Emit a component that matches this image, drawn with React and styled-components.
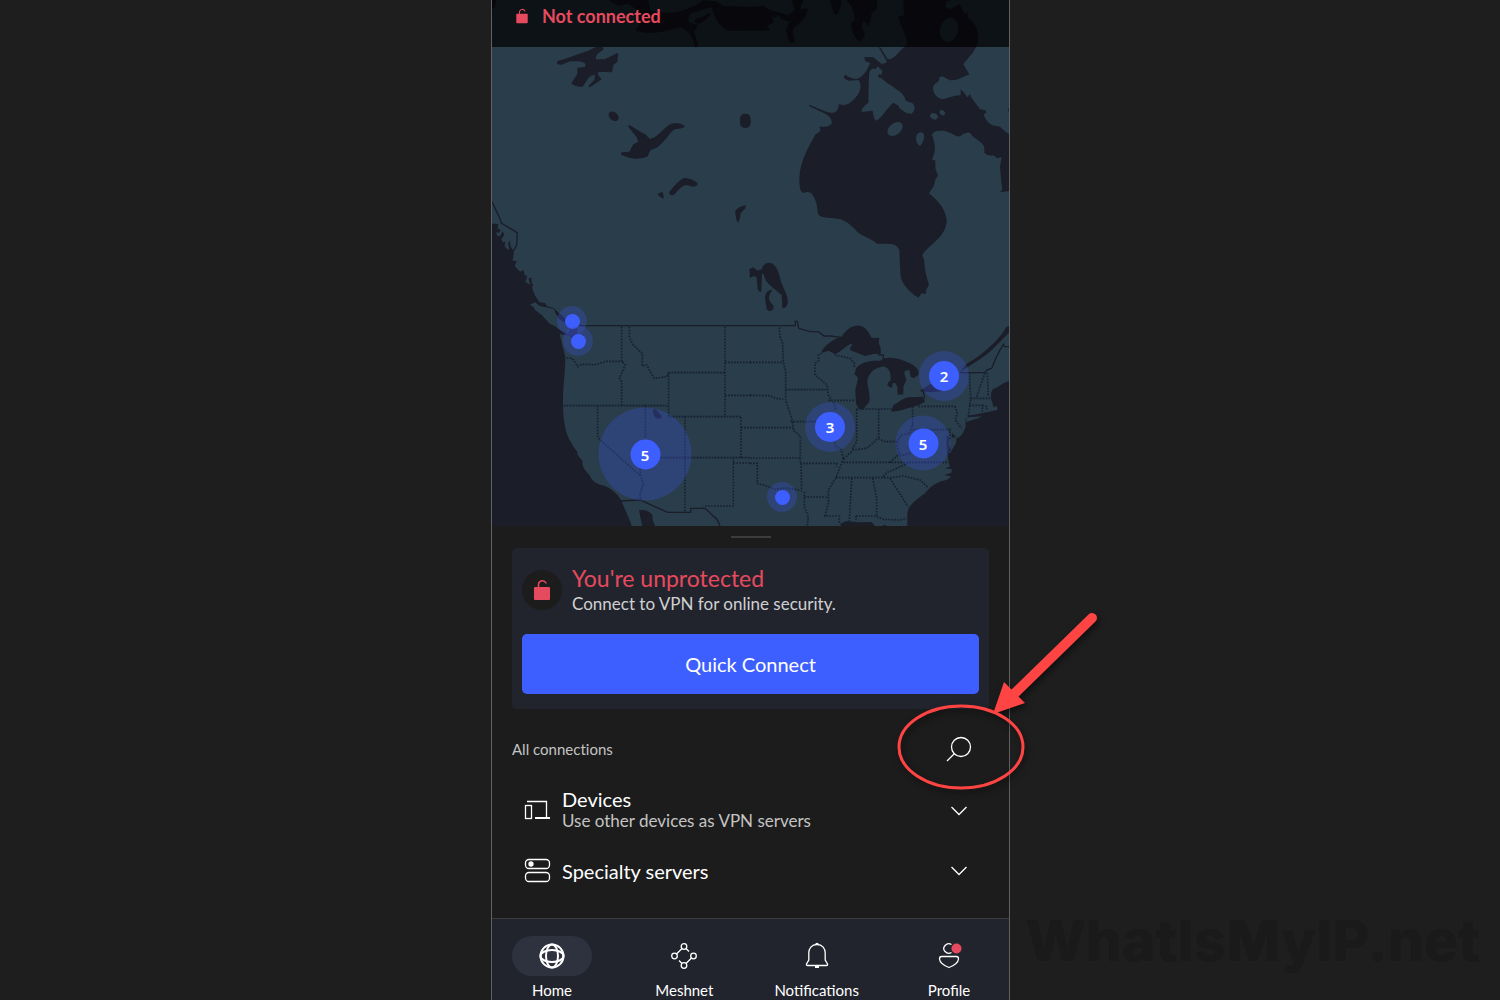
import React, { useState } from 'react';
import styled, { createGlobalStyle } from 'styled-components';

const MAP_WIDTH = 517;
const MAP_HEIGHT = 526;

const PINS = [
	{ id: 'vancouver', x: 80, y: 321, halo: 30, dot: 15 },
	{ id: 'seattle', x: 86, y: 341, halo: 30, dot: 15 },
	{ id: 'southwest', x: 153, y: 454, halo: 93, dot: 30, count: 5 },
	{ id: 'texas', x: 290, y: 497, halo: 30, dot: 15 },
	{ id: 'midwest', x: 338, y: 427, halo: 50, dot: 30, count: 3 },
	{ id: 'east', x: 431, y: 443, halo: 55, dot: 30, count: 5 },
	{ id: 'toronto', x: 452, y: 376, halo: 50, dot: 30, count: 2 },
];

const TABS = [
	{ id: 'home', label: 'Home', Icon: GlobeIcon },
	{ id: 'meshnet', label: 'Meshnet', Icon: MeshIcon },
	{ id: 'notifications', label: 'Notifications', Icon: BellIcon },
	{ id: 'profile', label: 'Profile', Icon: ProfileIcon },
];

function App() {
	const [tab, setTab] = useState('home');
	return (
		<>
			<GlobalStyle />
			<Page>
				<Phone>
					<MapArea>
						<WorldMap />
						{PINS.map((pin) => (
							<Pin
								key={pin.id}
								type="button"
								aria-label={`Servers: ${pin.id}`}
								$halo={pin.halo}
								$dot={pin.dot}
								style={{
									left: `${(pin.x / MAP_WIDTH) * 100}%`,
									top: `${(pin.y / MAP_HEIGHT) * 100}%`,
								}}
							>
								<span>{pin.count}</span>
							</Pin>
						))}
						<StatusBar>
							<LockIcon size={20} />
							Not connected
						</StatusBar>
					</MapArea>
					<Panel>
						<Handle />
						<Card>
							<CardHead>
								<LockBadge>
									<LockIcon size={28} />
								</LockBadge>
								<div>
									<CardTitle>You're unprotected</CardTitle>
									<CardText>Connect to VPN for online security.</CardText>
								</div>
							</CardHead>
							<ConnectButton type="button">Quick Connect</ConnectButton>
						</Card>
						<ListHead>
							<ListTitle>All connections</ListTitle>
							<IconButton type="button" aria-label="Search">
								<SearchIcon />
							</IconButton>
							<Pointer />
						</ListHead>
						<List>
							<Row type="button">
								<DevicesIcon />
								<RowBody>
									<RowTitle>Devices</RowTitle>
									<RowText>Use other devices as VPN servers</RowText>
								</RowBody>
								<ChevronIcon />
							</Row>
							<Row type="button">
								<ServersIcon />
								<RowBody>
									<RowTitle>Specialty servers</RowTitle>
								</RowBody>
								<ChevronIcon />
							</Row>
						</List>
					</Panel>
					<Nav>
						{TABS.map(({ id, label, Icon: TabGlyph }) => (
							<Tab key={id} type="button" onClick={() => setTab(id)}>
								<TabIcon $active={tab === id}>
									<TabGlyph />
								</TabIcon>
								<TabLabel>{label}</TabLabel>
							</Tab>
						))}
					</Nav>
				</Phone>
				<Watermark>WhatIsMyIP.net</Watermark>
			</Page>
		</>
	);
}

export default App;

// The map is drawn on a 3x grid, each group has its own corner as origin.
function WorldMap() {
	return (
		<Map viewBox="0 0 1551 1578" aria-hidden="true">
			<rect width="1551" height="1578" fill="#293d4a" />
			<g fill="#1b1d29">
				<g transform="translate(-6 0)">
					<path d="M6 0H20L14 22L6 26Z" />
					<path d="M355 0L385 18L415 12L440 30L450 70L437 90C460 102 500 100 530 92L572 82C600 95 610 115 615 142L625 140L612 95L625 75L600 68Q590 60 600 42L640 28L665 22C675 60 690 85 720 93L782 92V20L700 18L680 4L640 0C600 30 560 40 510 38L480 30L475 0Z" />
					<path d="M625 72L650 58L663 42L655 38L640 50L618 56L612 66Z" />
					<path d="M200 188Q202 180 215 180L295 152L318 141H338L341 148C325 160 315 165 318 178L345 178L380 160L385 160L382 185L370 195L366 217L325 215L324 225L335 238L300 262L295 258L313 240L315 225Q300 222 288 245L278 260Q255 262 244 250L262 222L262 203L285 201Q294 187 265 184L240 184L215 194Q203 196 200 188Z" />
					<ellipse cx="371" cy="349" rx="17" ry="12" transform="rotate(40 371 349)" />
					<path d="M415 376C425 374 440 392 465 402L480 417C510 410 525 375 550 370C565 368 582 372 584 380C580 386 560 384 550 390C535 405 520 430 500 443L482 450L472 470Q435 484 395 465Q390 460 395 457L418 455L430 433L445 425C440 405 425 395 415 380Z" />
					<rect x="750" y="341" width="32" height="43" rx="15" />
					<path d="M537 578C550 560 570 538 582 534Q605 534 623 550Q624 558 610 560L590 555C570 558 560 578 552 584Q542 590 537 578Z" />
					<path d="M502 583L510 578L518 576L522 596L512 592Z" />
					<path d="M735 635Q745 618 768 616L766 625L752 640L750 655L745 668L740 662Z" />
				</g>
				<g transform="translate(774 0)">
					<path d="M0 20L40 18L60 30L115 45L134 30L125 0H160L150 28L172 25C175 60 130 75 128 95L134 125Q120 130 115 120L108 90L118 65L95 58L85 44L78 52L65 50L72 68L52 76L60 90L40 92H0Z" />
					<path d="M240 0L248 30Q258 55 266 38L275 0Z" />
					<path d="M288 0C300 10 315 30 314 62L303 70C302 100 320 120 330 125Q344 115 344 100L336 80L340 62L355 77L362 60L365 38L380 28L382 0Z" />
					<path d="M460 0L462 45L444 50C452 80 475 110 470 136C450 148 435 175 420 178L412 176L392 143L386 142L410 183L408 189L395 192L370 172L343 171L345 182L360 190C352 212 335 237 318 237Q295 232 285 224L281 232Q288 242 298 242L325 240C335 250 335 275 315 295C300 312 285 320 268 312L262 330C255 340 245 340 230 336L178 314L178 319L220 338C235 345 245 355 246 368C238 382 225 380 208 380L212 392L195 405C180 435 150 480 148 535C148 560 150 575 160 579Q172 574 182 578C195 590 203 615 203 638C206 655 230 650 272 658C300 668 315 690 325 698C345 712 370 718 382 732C420 731 440 730 448 750L451 820C452 850 480 880 505 893L515 880L527 882L529 868L537 855L527 820L522 780L517 765C530 740 590 710 590 663C588 625 560 600 537 580C550 560 553 560 555 540L564 527L556 505V482L546 478C560 450 555 430 546 405C550 390 570 392 580 392C605 396 618 412 630 409Q650 394 660 399C675 420 700 425 703 442V458Q715 470 730 466L742 475L755 471L750 500L754 545L757 570L748 577L777 573V403Q765 395 750 380L725 375C710 365 705 352 700 344L710 337L704 330L690 328L665 294L660 282L652 292L643 279L632 268L632 285C600 288 590 298 575 297C550 290 545 265 552 255C560 245 570 245 568 232L577 229L600 241L620 239L658 223L640 193C655 170 685 150 685 110C685 90 670 60 655 55L652 35L645 42L628 12L600 28L586 20L590 5L605 0Z" />
					<path d="M777 322L774 330L777 336Z" />
				</g>
			</g>
			<g transform="translate(774 0)" fill="#293d4a">
				<path d="M358 215L366 206L378 207L382 198L397 212L395 224L388 222L384 232L395 235C420 260 465 275 467 302L488 310Q502 325 485 341L470 340L448 325L446 317L430 308C410 325 395 355 378 362Q370 355 368 332L335 336Q332 325 355 308Q356 240 358 215Z" />
				<ellipse cx="435" cy="387" rx="26" ry="17" transform="rotate(-38 435 387)" />
				<path d="M500 404Q510 392 521 400Q526 420 510 439Q493 425 500 404Z" />
				<ellipse cx="552" cy="349" rx="12" ry="9" transform="rotate(25 552 349)" />
				<ellipse cx="577" cy="338" rx="9" ry="7" transform="rotate(40 577 338)" />
				<ellipse cx="597" cy="90" rx="27" ry="36" transform="rotate(12 597 90)" />
			</g>
			<g fill="#1b1d29">
				<g transform="translate(-6 600)">
					<path d="M0 70L25 73L22 85L32 90L28 97L18 98L22 108L30 108L38 94L43 104L34 118L40 128L46 124L44 140L54 149L58 146L54 130L60 122L62 140L70 150L72 155L68 182L80 184L74 198L90 215L100 210L104 226L112 228L106 245L120 255L116 235L124 233L125 250L130 254L126 262C130 280 140 295 148 307L165 309L170 318L192 325L205 338L225 355L262 376V400L248 412L232 406L209 402L218 440L226 470C226 520 218 560 219 617C220 690 235 720 262 755C260 770 278 778 278 785C275 795 282 810 298 825C308 848 325 853 345 858C370 870 388 888 395 905C405 930 420 960 426 980H0Z" />
					<path d="M447 931Q470 926 487 944L488 960L496 980H457Z" />
					<path d="M489 628L497 628L515 648L512 656L498 655Q488 645 489 628Z" />
				</g>
				<g transform="translate(774 660)">
					<path d="M-2 147L10 142L22 152L35 148C40 130 55 125 65 130C85 140 88 170 95 190C105 215 115 230 113 250Q108 268 97 264L95 225L65 200Q45 185 42 165L36 160L34 212Q30 222 23 208L20 172L10 168L0 174Z" />
					<path d="M67 209Q45 210 45 235L50 268Q58 278 70 268L70 256Q50 240 60 222Z" />
					<path d="M215 393C230 370 255 355 275 350C290 325 310 315 330 317C350 320 360 345 365 353L388 354L386 370L392 385V402L370 402L345 408L300 390L300 385L308 373L300 372C280 385 265 400 255 402L235 392L217 398Z" />
					<path d="M313 465L318 445C335 425 365 420 390 423L402 415C430 408 460 420 480 430C500 440 510 455 505 465L490 475L482 470L478 450L465 452L463 460L469 480L460 500V523L443 524L442 500L435 488L428 490L426 503L412 497L414 488L422 480C424 450 410 438 395 440C365 445 350 470 352 490C358 520 360 530 358 545L340 568Q325 572 318 550L316 510L324 475L318 466Z" />
					<path d="M424 575L430 555C445 550 455 535 475 532L518 530L524 540V546L505 556L445 573Z" />
					<path d="M508 514L540 493L600 490L578 513L540 517Z" />
					<path d="M630 458C650 440 690 420 720 395C745 370 765 350 777 338V318L768 322C755 350 720 382 690 405C665 425 645 430 640 444Z" />
					<path d="M777 482L760 490L740 503Q722 505 723 530L730 560L740 560L733 553L742 560L742 570L695 580L655 587L646 600L647 620L640 635L635 645L622 655L605 638L607 653L620 650L618 670L600 700L590 690L595 720L600 740L585 745L606 748L604 758L583 765L604 770L590 780C560 785 540 800 525 820C500 840 474 855 472 880V920H777Z" />
					<path d="M590 645L600 655L596 668L602 690L594 698L590 680Z" />
					<path d="M270 912L290 903L325 907L365 906L376 920H275Z" />
					<path d="M395 920L402 914L415 920Z" />
				</g>
			</g>
			<path
				transform="translate(-6 600)"
				fill="#293d4a"
				d="M119 314L135 307L150 318L192 327L196 338L222 365L240 390L232 400L205 388L195 378L180 372L155 345L135 330L130 320Z"
			/>
			<path
				transform="translate(-6 600)"
				fill="#1b1d29"
				d="M195 336L210 342L226 356L222 366L208 358Z"
			/>
			<path transform="translate(774 660)" fill="#293d4a" d="M652 592L695 589L685 595L647 606Z" />
			<Border>
				<g transform="translate(-6 600)">
					<path d="M6 5L28 52L35 70L82 98L80 135L71 152M262 377H782M392 903L450 900L533 937H602V925H645L672 950Q686 960 690 980" />
				</g>
				<g transform="translate(774 660)">
					<path d="M0 317H136V304H142L146 325L180 335L205 335L222 348L240 348L274 352M385 405H400V420M630 458H705L710 450L725 445L735 420L750 390L760 373L764 380H777M524 535L520 515" />
				</g>
			</Border>
			<Border $dotted>
				<g transform="translate(-6 600)">
					<path d="M230 474L245 475L252 482L263 500L275 493L315 494L350 484L398 484" />
					<path d="M395 380V484L406 494L388 535L395 545V617" />
					<path d="M418 380V412L430 435L458 462L456 498L470 495L492 535L530 530L536 518" />
					<path d="M536 518H705M705 380V650M705 487H782M705 586H782M536 518V650H753V773M221 617H536" />
					<path d="M323 617V713L452 828M450 805L452 828L460 852L450 880L452 900" />
					<path d="M466 617V716M585 650V937M512 773H782M753 683H782M730 773V918H640M730 789H782" />
				</g>
				<g transform="translate(774 660)">
					<path d="M88 322L90 350L98 370L100 427L107 455V509M0 427H100M107 509H232M0 526L60 527L78 535L100 538M107 509V540L128 605" />
					<path d="M0 623H128M122 605H200M128 605L130 630L151 650V730M0 714H150M151 730H260V740M0 730H22V790L50 798L75 808L110 804L155 812M153 730L155 812" />
					<path d="M163 815V860L175 890L172 918M163 831H230M215 400L205 405L206 422L195 430V465L232 495L235 525L252 550L258 570" />
					<path d="M235 541H315M255 405L300 415L313 430V445M320 568V665L305 690M320 567H430M386 567V655M488 560V620M505 559H615" />
					<path d="M615 559L622 580L616 600L635 625M488 629H600V660M250 650L258 680L275 690L280 718L310 690L350 685L385 655L405 665L440 665L455 645L480 640L488 610" />
					<path d="M280 727H600M258 773H420L460 768L510 780L535 803M280 715L258 773L235 810V850L225 888H268V912M305 775L298 905" />
					<path d="M368 775L380 835V890L400 898L450 900L470 895M318 888H380M318 888V900M420 775L455 830L474 860" />
					<path d="M400 770L410 758L480 727M420 727L450 700L440 680L445 660M450 708L480 700L510 665L560 640" />
					<path d="M658 458L662 535L655 590M662 535H720L728 540M658 556H697V575M697 556L710 560V572M712 458L715 530M705 458L690 500L680 530" />
				</g>
			</Border>
		</Map>
	);
}

// Ellipse round the search button with the arrow that leads to it
function Pointer() {
	return (
		<PointerSvg viewBox="0 0 220 200" aria-hidden="true">
			<ellipse cx="71" cy="147" rx="62" ry="41" fill="none" stroke="#ff4444" strokeWidth="3" />
			<path d="M202 18L122 96" stroke="#ff4444" strokeWidth="10" strokeLinecap="round" />
			<path d="M103 114L114 82L135 103Z" fill="#ff4444" />
		</PointerSvg>
	);
}

function LockIcon({ size }) {
	return (
		<svg width={size} height={size} viewBox="0 0 28 28" fill="none" aria-hidden="true">
			<rect x="6" y="11" width="16" height="13" rx="1" fill="#e64a5e" />
			<path
				d="M10.5 12V8A4 4 0 0 1 18 7"
				stroke="#e64a5e"
				strokeWidth="1.5"
				strokeLinecap="round"
			/>
		</svg>
	);
}

function SearchIcon() {
	return (
		<Icon $size={28} viewBox="0 0 28 28">
			<circle cx="16" cy="12" r="9.5" />
			<path d="M9.5 18.5L2 26" />
		</Icon>
	);
}

function DevicesIcon() {
	return (
		<Icon $size={30} viewBox="0 0 30 30">
			<rect x="3.5" y="9.5" width="6" height="13" />
			<path d="M5 5.5H24.5V21" />
			<path d="M13 22H28" strokeWidth="2" />
		</Icon>
	);
}

function ServersIcon() {
	return (
		<Icon $size={30} viewBox="0 0 30 30">
			<rect x="3.5" y="3.5" width="24" height="9" rx="3.5" />
			<rect x="3.5" y="16.5" width="24" height="9" rx="3.5" />
			<circle cx="9" cy="8" r="2" fill="#fff" />
		</Icon>
	);
}

function ChevronIcon() {
	return (
		<Icon $size={20} viewBox="0 0 20 20">
			<path d="M2.5 6L10 13.5L17.5 6" />
		</Icon>
	);
}

function GlobeIcon() {
	return (
		<Icon $size={28} $weight={2} viewBox="0 0 28 28">
			<circle cx="14" cy="14" r="11.5" />
			<ellipse cx="14" cy="14" rx="6" ry="11.5" />
			<ellipse cx="14" cy="14" rx="11.5" ry="6" />
		</Icon>
	);
}

function MeshIcon() {
	return (
		<Icon $size={28} viewBox="0 0 28 28">
			<circle cx="14" cy="4.5" r="2.8" />
			<circle cx="4.5" cy="14" r="2.8" />
			<circle cx="23.5" cy="14" r="2.8" />
			<circle cx="14" cy="23.5" r="2.8" />
			<path d="M12 6.5L6.5 12M16 6.5L19 9.5M21.5 16L16 21.5M12 21.5L9 18.5" />
		</Icon>
	);
}

function BellIcon() {
	return (
		<Icon $size={28} viewBox="0 0 28 28">
			<path d="M14 2.5C8.5 2.5 5.8 6.5 5.8 11V18L3.5 22Q3.2 23.5 4.5 23.5H23.5Q24.8 23.5 24.5 22L22.2 18V11C22.2 6.5 19.5 2.5 14 2.5Z" />
			<path d="M12.5 2L14 1.5L15.5 2" />
			<path d="M12 25H16" strokeWidth="2" />
		</Icon>
	);
}

function ProfileIcon() {
	return (
		<Icon $size={28} viewBox="0 0 28 28">
			<path d="M16.5 2.5A5 4.7 0 1 0 16.5 10.5" />
			<path d="M6.5 14.5H21.5Q23.5 14.5 23.5 17C23 22 18 24 14 25.5C10 24 5 22 4.5 17Q4.5 14.5 6.5 14.5Z" />
			<circle cx="21.5" cy="6.5" r="5" fill="#e64a5e" stroke="none" />
		</Icon>
	);
}

const GlobalStyle = createGlobalStyle`
	* {
		box-sizing: border-box;
	}
	body {
		margin: 0;
		background: #1e1e1e;
		font-family: Lato, 'Open Sans', sans-serif;
		font-variant-ligatures: none;
	}
	button {
		padding: 0;
		border: 0;
		background: none;
		color: inherit;
		font-family: inherit;
		cursor: pointer;
	}
`;

const Page = styled.main`
	position: relative;
	display: flex;
	justify-content: center;
	min-height: 100vh;
	padding-left: 1px;
	overflow: hidden;
`;

const Phone = styled.div`
	display: flex;
	flex-direction: column;
	width: 100%;
	max-width: 519px;
	border: 1px solid #606060;
	border-width: 0 1px;
	background: #1c1c1c;
	color: #fff;
`;

const MapArea = styled.section`
	position: relative;
`;

const Map = styled.svg`
	display: block;
	width: 100%;
	height: auto;
`;

const Border = styled.g`
	fill: none;
	stroke: ${({ $dotted }) => ($dotted ? '#172030' : '#1b1d29')};
	stroke-width: ${({ $dotted }) => ($dotted ? 5 : 4)};
	stroke-dasharray: ${({ $dotted }) => ($dotted ? '5 4' : 'none')};
`;

const Pin = styled.button`
	position: absolute;
	display: flex;
	align-items: center;
	justify-content: center;
	width: ${({ $halo }) => $halo}px;
	height: ${({ $halo }) => $halo}px;
	border-radius: 50%;
	background: rgba(56, 80, 200, 0.35);
	transform: translate(-50%, -50%);
	> span {
		width: ${({ $dot }) => $dot}px;
		height: ${({ $dot }) => $dot}px;
		border-radius: 50%;
		background: #3e5fff;
		color: #fff;
		font-family: 'Noto Sans', sans-serif;
		font-size: 15px;
		font-weight: 600;
		line-height: 30px;
	}
`;

const StatusBar = styled.header`
	position: absolute;
	top: 0;
	left: 0;
	right: 0;
	display: flex;
	gap: 10px;
	height: 47px;
	padding: 6px 20px;
	background: rgba(0, 0, 0, 0.7);
	color: #e64a5e;
	font-size: 18px;
	font-weight: bold;
	line-height: 20px;
`;

const Panel = styled.section`
	flex: 1;
	padding: 10px 20px 24px;
`;

const Handle = styled.div`
	width: 40px;
	height: 2px;
	margin: 0 auto 10px;
	background: #3c3c3c;
`;

const Card = styled.div`
	padding: 16px 10px 15px;
	border-radius: 5px;
	background: #22242d;
`;

const CardHead = styled.div`
	display: flex;
	align-items: center;
	gap: 10px;
	margin-bottom: 18px;
`;

const LockBadge = styled.div`
	display: flex;
	align-items: center;
	justify-content: center;
	width: 40px;
	height: 40px;
	border-radius: 50%;
	background: #1c1c1c;
`;

const CardTitle = styled.h1`
	margin: 0;
	color: #e64a5e;
	font-size: 23px;
	font-weight: normal;
	line-height: 28px;
`;

const CardText = styled.p`
	margin: 0;
	color: #d0d0d2;
	font-size: 17px;
	line-height: 24px;
`;

const ConnectButton = styled.button`
	width: 100%;
	height: 60px;
	border-radius: 5px;
	background: #3e5fff;
	font-size: 20px;
`;

const ListHead = styled.div`
	position: relative;
	display: flex;
	align-items: center;
	justify-content: space-between;
	height: 80px;
	padding-right: 16px;
`;

const ListTitle = styled.h2`
	margin: 0;
	color: #c4c4c4;
	font-size: 15px;
	font-weight: normal;
`;

const IconButton = styled.button`
	display: flex;
`;

const PointerSvg = styled.svg`
	position: absolute;
	top: -109px;
	right: -121px;
	width: 220px;
	height: 200px;
	filter: drop-shadow(2px 3px 3px rgba(0, 0, 0, 0.5));
	pointer-events: none;
`;

const List = styled.div`
	display: flex;
	flex-direction: column;
	gap: 16px;
`;

const Row = styled.button`
	display: flex;
	align-items: center;
	gap: 10px;
	height: 44px;
	padding: 0 20px 0 10px;
	text-align: left;
`;

const RowBody = styled.div`
	flex: 1;
`;

const RowTitle = styled.div`
	font-size: 20px;
	line-height: 20px;
`;

const RowText = styled.div`
	color: #c4c4c4;
	font-size: 17px;
	line-height: 24px;
`;

const Icon = styled.svg`
	flex-shrink: 0;
	width: ${({ $size }) => $size}px;
	height: ${({ $size }) => $size}px;
	fill: none;
	stroke: #fff;
	stroke-width: ${({ $weight }) => $weight || 1.3};
	overflow: visible;
`;

const Nav = styled.nav`
	display: flex;
	justify-content: space-between;
	padding: 17px 20px 0;
	border-top: 1px solid #3a3b3d;
	background: #22242d;
`;

const Tab = styled.button`
	display: flex;
	flex-direction: column;
	align-items: center;
	gap: 4px;
	width: 80px;
`;

const TabIcon = styled.span`
	display: flex;
	align-items: center;
	justify-content: center;
	width: 80px;
	height: 40px;
	border-radius: 20px;
	background: ${({ $active }) => ($active ? '#2e313e' : 'none')};
`;

const TabLabel = styled.span`
	font-size: 15px;
	line-height: 20px;
`;

const Watermark = styled.div`
	position: absolute;
	right: 20px;
	bottom: 24px;
	color: #1a1a1a;
	font-family: Inter, sans-serif;
	font-size: 57px;
	font-weight: 800;
	line-height: 70px;
`;
